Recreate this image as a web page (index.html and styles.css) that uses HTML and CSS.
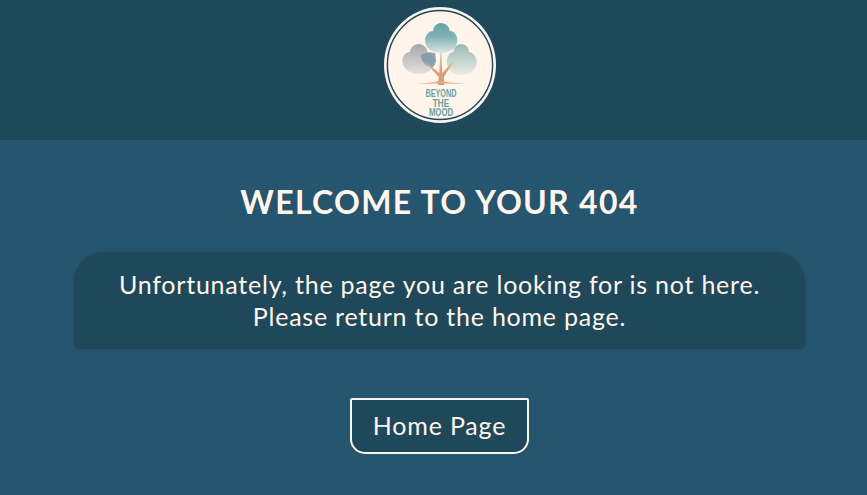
FILE: index.html
```html
<!DOCTYPE html>
<html lang="en">
<head>
    <meta charset="UTF-8">
    <meta name="viewport" content="width=device-width, initial-scale=1.0">
    <title>Beyond The Mood - 404</title>
    <link rel="stylesheet" href="styles.css">
</head>
<body>
    <header>
        <svg class="logo" width="112" height="116" viewBox="0 0 116 116" preserveAspectRatio="none" role="img" aria-label="Beyond The Mood logo">
            <defs>
                <linearGradient id="leaf-teal" x1="0" y1="0" x2="0" y2="1">
                    <stop offset="0" stop-color="#66a3a8"/>
                    <stop offset="0.45" stop-color="#80b2b4"/>
                    <stop offset="1" stop-color="#dbe6e0"/>
                </linearGradient>
                <linearGradient id="leaf-grey" x1="0" y1="0" x2="0" y2="1">
                    <stop offset="0" stop-color="#a4a8ad"/>
                    <stop offset="1" stop-color="#e4e0dc"/>
                </linearGradient>
                <linearGradient id="leaf-green" x1="0" y1="0" x2="0" y2="1">
                    <stop offset="0" stop-color="#97b9b9"/>
                    <stop offset="1" stop-color="#ecece4"/>
                </linearGradient>
                <linearGradient id="trunk" x1="0" y1="0" x2="0" y2="1">
                    <stop offset="0" stop-color="#c9d3cc"/>
                    <stop offset="0.5" stop-color="#dca27c"/>
                    <stop offset="1" stop-color="#d8966c"/>
                </linearGradient>
            </defs>
            <circle cx="58" cy="58" r="58" fill="#fff5ea"/>
            <circle cx="58" cy="58" r="54.500" fill="#fff5ea" stroke="#1f485b" stroke-width="1.500"/>
            <path d="M36 37C41 37 45 41 45 45C50 45 53 50 53 54C53 62 45 67 36 67C27 67 19 62 19 54C19 50 22 45 27 45C27 41 31 37 36 37Z" fill="url(#leaf-grey)"/>
            <path d="M80 37C85 37 88 41 88 45C92 45 96 50 96 55C96 63 89 68 80 68C72 68 65 63 65 55C65 50 68 45 72 45C72 41 75 37 80 37Z" fill="url(#leaf-green)"/>
            <path d="M59 16C64 16 68 20 68 24C73 24 76 29 76 33C76 41 68 46 59 46C50 46 42.500 41 42.500 33C42.500 29 46 24 51 24C51 20 54 16 59 16Z" fill="url(#leaf-teal)"/>
            <path d="M38 48C43 45 49 45 53 46L54 54C53 58 51 60 49 60C44 60 38 54 38 48Z" fill="#7c96a1" opacity="0.8"/>
            <path d="M58.300 46H59.700L60.300 66L71 55L71.600 55.600L62 70L62.500 78H56L56.800 70L44 56.500L44.600 56L57.300 66Z" fill="url(#trunk)"/>
            <path d="M33 76C42 76 51 76 56 74H62C67 76 76 76 85 76C76 77 67 76.600 61 76.600H56C50 76.600 42 77 33 76Z" fill="#e3ab84"/>
            <text class="logo-text" x="59" y="90.500" text-anchor="middle" textLength="32" lengthAdjust="spacingAndGlyphs">BEYOND</text>
            <text class="logo-text" x="59" y="100" text-anchor="middle" textLength="17" lengthAdjust="spacingAndGlyphs">THE</text>
            <text class="logo-text" x="59" y="109.500" text-anchor="middle" textLength="25" lengthAdjust="spacingAndGlyphs">MOOD</text>
        </svg>
    </header>

    <main class="content">
        <h1>WELCOME TO YOUR 404</h1>
        <div class="message">
            <p>Unfortunately, the page you are looking for is not here.</p>
            <p>Please return to the home page.</p>
        </div>
        <a class="home-button" href="#">Home Page</a>
    </main>
</body>
</html>
```

FILE: styles.css
```css
body {
    font-family: Lato, "Open Sans", sans-serif;
    background-color: #26566f;
    color: #fff5ea;
    margin: 0;
    padding: 0;
}

header {
    background-color: #1f485b;
    height: 140px;
    padding: 7px 0 0 13px;
    box-sizing: border-box;
    display: flex;
    justify-content: center;
}

.logo {
    display: block;
}

.logo-text {
    font-family: "Liberation Sans", sans-serif;
    font-size: 10px;
    font-weight: 700;
    fill: #6b9fa5;
}

.content {
    padding-left: 12px;
    display: flex;
    flex-direction: column;
    align-items: center;
}

h1 {
    font-size: 32px;
    line-height: 40px;
    font-weight: 700;
    letter-spacing: 1.3px;
    margin: 42px 0 30px;
}

.message {
    width: 731px;
    height: 97px;
    box-sizing: border-box;
    padding-top: 16px;
    background-color: #1f485b;
    border-radius: 30px 30px 5px 5px;
    box-shadow: 0 0 4px rgba(0, 0, 0, 0.12);
    text-align: center;
    font-size: 25px;
    line-height: 32px;
    letter-spacing: 0.77px;
}

.message p {
    margin: 0;
}

.home-button {
    margin-top: 49px;
    width: 179px;
    height: 56px;
    box-sizing: border-box;
    padding-bottom: 2px;
    display: flex;
    align-items: center;
    justify-content: center;
    background-color: #1f485b;
    border: 2px solid #fff5ea;
    border-radius: 2px 2px 15px 15px;
    color: #fff5ea;
    font-size: 25px;
    letter-spacing: 0.8px;
    text-decoration: none;
}
```
